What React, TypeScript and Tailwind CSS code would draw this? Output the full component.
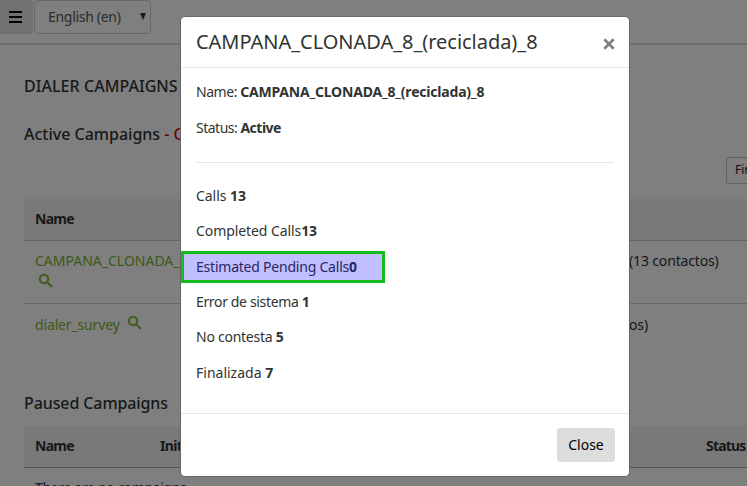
import type { ReactNode } from "react";

function SearchIcon() {
  return (
    <svg viewBox="3 3 17.49 17.49" className="h-[13.5px] w-[13.5px] shrink-0 overflow-visible" fill="#79b530" stroke="#79b530" strokeWidth="0.6">
      <path d="M15.5 14h-.79l-.28-.27A6.471 6.471 0 0 0 16 9.5 6.5 6.5 0 1 0 9.5 16c1.61 0 3.09-.59 4.23-1.57l.27.28v.79l5 4.99L20.49 19l-4.99-5zm-6 0C7.01 14 5 11.99 5 9.5S7.01 5 9.5 5 14 7.01 14 9.5 11.99 14 9.5 14z" />
    </svg>
  );
}

function Stat({ children, spacing = "tracking-[-0.2px]" }: { children: ReactNode; spacing?: string }) {
  return <p className={`flex h-[35.4px] shrink-0 items-center whitespace-pre ${spacing}`}>{children}</p>;
}

function Page() {
  return (
    <div className="h-full w-full bg-white text-[14px] text-[#303432]">
      <header className="flex h-[45px] border-b-2 border-[#dedede]">
        <button className="flex h-[34px] w-[33px] items-center justify-center rounded-r-[3px] bg-[#e2e2e2] pr-[3px]">
          <span className="flex w-[13px] flex-col gap-[3px]">
            <span className="h-[2px] bg-black" />
            <span className="h-[2px] bg-black" />
            <span className="h-[2px] bg-black" />
          </span>
        </button>
        <div className="ml-px flex h-[34px] w-[117px] items-center justify-between rounded-[4px] border border-[#cfcfcf] pr-[4px] pb-px pl-[13px] text-[#55595c]">
          <span className="tracking-[-0.3px]">English (en)</span>
          <svg viewBox="0 0 7 7" className="h-[7px] w-[6px]" preserveAspectRatio="none">
            <path d="M0 0H7L3.5 7Z" fill="#333" />
          </svg>
        </div>
      </header>
      <main className="flex h-[441px] flex-col overflow-hidden pl-6 whitespace-nowrap">
        <h1 className="mt-[29px] h-6 shrink-0 text-[16px] leading-6 font-medium tracking-[0.05px]">DIALER CAMPAIGNS</h1>
        <h2 className="mt-6 h-6 shrink-0 text-[16px] leading-6 font-medium">
          Active Campaigns <span className="text-[#d90012]">- C</span>
        </h2>
        <div className="mt-[11px] flex h-[27px] shrink-0 justify-end">
          <div className="w-[21px] rounded-l-[3px] border border-r-0 border-[#c4c4c4] pl-[8px] text-[12px] leading-[24px] text-[#1d2129]">Fin</div>
        </div>
        <div className="mt-[15px] flex h-[42px] shrink-0 items-center border-b border-[#c4c4c4] bg-[#f3f3f3] pb-[2px] pl-[11px] font-bold tracking-[-0.7px]">
          <span>Name</span>
        </div>
        <div className="flex h-[63px] shrink-0 border-b border-[#cfcfcf] pt-[9px] pl-[11px]">
          <div className="w-[594px] text-[#79b530]">
            <div className="h-[24px] leading-[22px]">CAMPANA_CLONADA_</div>
            <div className="pl-1"><SearchIcon /></div>
          </div>
          <span className="leading-[22px] tracking-[-0.15px]">(13 contactos)</span>
        </div>
        <div className="flex h-[41px] shrink-0 items-center pb-px pl-[11px]">
          <div className="flex w-[594px] items-center gap-2 text-[#79b530]">
            <span className="tracking-[-0.15px]">dialer_survey</span>
            <span className="pb-[2px]"><SearchIcon /></span>
          </div>
          <span className="tracking-[-0.15px]">os)</span>
        </div>
        <h2 className="mt-[46px] h-6 shrink-0 text-[16px] leading-6 font-medium tracking-[-0.1px]">Paused Campaigns</h2>
        <div className="mt-[11px] flex h-[42px] shrink-0 items-center border-b border-[#adadad] bg-[#f3f3f3] pb-[2px] pl-[11px] font-bold tracking-[-0.7px]">
          <span className="w-[125px]">Name</span>
          <span className="w-[546px]">Init</span>
          <span className="tracking-[-0.8px]">Status</span>
        </div>
        <div className="mt-[9px] shrink-0 pl-[11px] leading-[22px] tracking-[-0.33px]">There are no campaigns</div>
      </main>
    </div>
  );
}

export default function App() {
  return (
    <div className="relative h-[486px] w-[747px] overflow-hidden font-['Noto_Sans',sans-serif]">
      <Page />
      <div className="absolute inset-0 bg-black/50" />
      <section className="absolute top-4 left-[180px] flex h-[461px] w-[450px] flex-col rounded-[5px] border border-[#666] bg-white text-[14px] whitespace-nowrap text-[#303432]">
        <header className="flex h-[51px] shrink-0 items-center justify-between border-b border-[#e5e5e5] px-[15px]">
          <h2 className="mb-px text-[20px] tracking-[-0.03px]">CAMPANA_CLONADA_8_(reciclada)_8</h2>
          <svg viewBox="0 0 12 12" className="mt-[3px] mr-[-1px] h-3 w-3" stroke="#808080" strokeWidth="2.7">
            <path d="M1.3 1.3L10.7 10.7M10.7 1.3L1.3 10.7" />
          </svg>
        </header>
        <div className="flex flex-1 flex-col px-[15px] pt-[6px]">
          <Stat spacing="tracking-[-0.45px]">Name: <b className="tracking-[-0.2px]">CAMPANA_CLONADA_8_(reciclada)_8</b></Stat>
          <Stat spacing="tracking-[-0.5px]">Status: <b>Active</b></Stat>
          <hr className="mt-[17px] mb-[15px] shrink-0 border-[#e5e5e5]" />
          <Stat spacing="tracking-[-0.05px]">Calls <b>13</b></Stat>
          <Stat spacing="tracking-[-0.08px]">Completed Calls<b>13</b></Stat>
          <div className="-mx-[15px] mt-[2px] mb-px flex h-[32px] w-[204px] shrink-0 items-center border-[3px] border-[#12bd1c] bg-[#c1bfff] pl-[12px] tracking-[-0.22px] text-[#282765]">
            Estimated Pending Calls<b>0</b>
          </div>
          <Stat spacing="tracking-[-0.35px]">Error de sistema <b>1</b></Stat>
          <Stat spacing="tracking-[-0.26px]">No contesta <b>5</b></Stat>
          <Stat spacing="tracking-[0px]">Finalizada <b>7</b></Stat>
        </div>
        <footer className="flex h-[63px] shrink-0 items-center justify-end border-t border-[#e5e5e5] px-[14px]">
          <button className="h-[34px] w-[58px] rounded-[3px] bg-[#ddd] pb-[2px] text-black">Close</button>
        </footer>
      </section>
    </div>
  );
}
